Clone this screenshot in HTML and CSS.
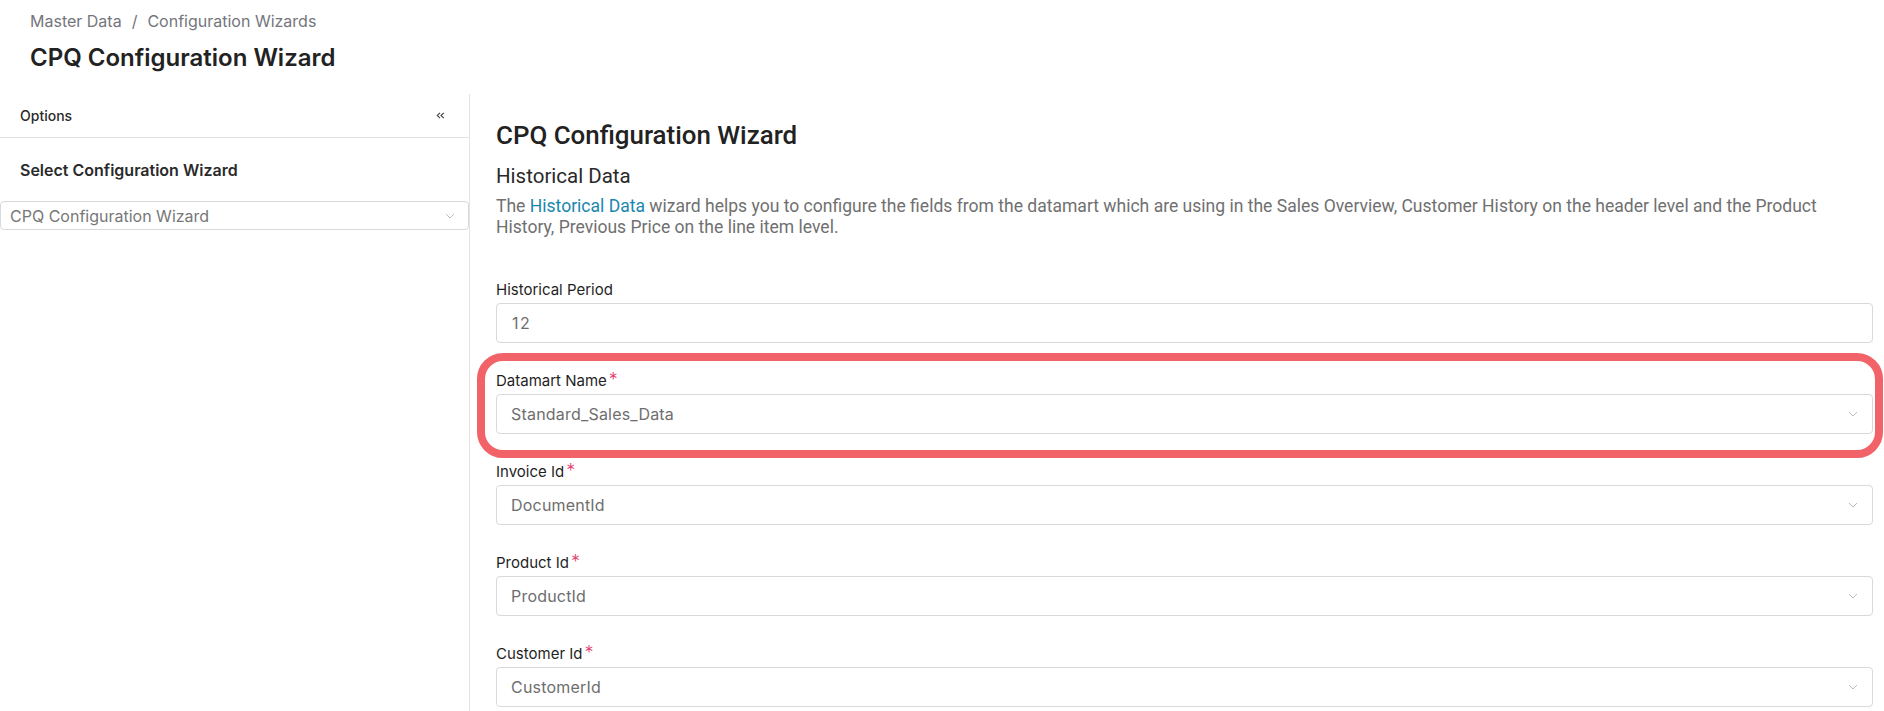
FILE: index.html
```html
<!DOCTYPE html>
<html lang="en">
<head>
<meta charset="utf-8">
<title>CPQ Configuration Wizard</title>
<link rel="stylesheet" href="styles.css">
</head>
<body>
<div class="page">
  <header class="page-header">
    <nav class="breadcrumb">
      <span>Master Data</span>
      <span class="sep">/</span>
      <span>Configuration Wizards</span>
    </nav>
    <h1 class="page-title">CPQ Configuration Wizard</h1>
  </header>

  <div class="layout">
    <aside class="sidebar">
      <div class="sidebar-head">
        <span class="sidebar-title">Options</span>
        <span class="collapse">
          <svg width="9" height="7" viewBox="0 0 9 7"><path d="M4 0.8 L1.2 3.5 L4 6.2 M7.8 0.8 L5 3.5 L7.8 6.2" fill="none" stroke="#444" stroke-width="1.1"/></svg>
        </span>
      </div>
      <div class="sidebar-body">
        <h3 class="sidebar-section">Select Configuration Wizard</h3>
        <div class="select select-sm">
          <span class="select-value">CPQ Configuration Wizard</span>
          <svg class="chev" width="10" height="6" viewBox="0 0 10 6"><path d="M1 1 L5 5 L9 1" fill="none" stroke="#bdbdbd" stroke-width="1"/></svg>
        </div>
      </div>
    </aside>

    <main class="content">
      <h2 class="wizard-title">CPQ Configuration Wizard</h2>
      <h4 class="wizard-sub">Historical Data</h4>
      <p class="wizard-desc">The <a class="link">Historical Data</a> wizard helps you to configure the fields from the datamart which are using in the Sales Overview, Customer History on the header level and the Product History, Previous Price on the line item level.</p>

      <div class="form">
        <div class="field">
          <label class="label">Historical Period</label>
          <div class="input"><span class="num">12</span></div>
        </div>

        <div class="field highlight">
          <div class="ring"></div>
          <label class="label">Datamart Name<span class="req">*</span></label>
          <div class="select">
            <span class="select-value">Standard_Sales_Data</span>
            <svg class="chev" width="10" height="6" viewBox="0 0 10 6"><path d="M1 1 L5 5 L9 1" fill="none" stroke="#bdbdbd" stroke-width="1"/></svg>
          </div>
        </div>

        <div class="field">
          <label class="label">Invoice Id<span class="req">*</span></label>
          <div class="select">
            <span class="select-value">DocumentId</span>
            <svg class="chev" width="10" height="6" viewBox="0 0 10 6"><path d="M1 1 L5 5 L9 1" fill="none" stroke="#bdbdbd" stroke-width="1"/></svg>
          </div>
        </div>

        <div class="field">
          <label class="label">Product Id<span class="req">*</span></label>
          <div class="select">
            <span class="select-value">ProductId</span>
            <svg class="chev" width="10" height="6" viewBox="0 0 10 6"><path d="M1 1 L5 5 L9 1" fill="none" stroke="#bdbdbd" stroke-width="1"/></svg>
          </div>
        </div>

        <div class="field">
          <label class="label">Customer Id<span class="req">*</span></label>
          <div class="select">
            <span class="select-value">CustomerId</span>
            <svg class="chev" width="10" height="6" viewBox="0 0 10 6"><path d="M1 1 L5 5 L9 1" fill="none" stroke="#bdbdbd" stroke-width="1"/></svg>
          </div>
        </div>
      </div>
    </main>
  </div>
</div>
</body>
</html>
```

FILE: styles.css
```css
* { box-sizing: border-box; }

html, body {
  margin: 0;
  padding: 0;
  background: #ffffff;
  font-family: Inter, "Noto Sans", sans-serif;
  color: #222;
  overflow: hidden;
}

.page {
  width: 100%;
  height: 711px;
  display: flex;
  flex-direction: column;
}

/* Header */
.page-header {
  padding: 11px 0 20px 30px;
}

.breadcrumb {
  display: flex;
  gap: 10px;
  font-size: 16px;
  line-height: 20px;
  color: #75757c;
}

.page-title {
  margin: 11px 0 0 0;
  font-size: 24px;
  line-height: 32px;
  font-weight: 600;
  color: #222;
}

/* Layout */
.layout {
  flex: 1;
  display: flex;
  min-height: 0;
}

.sidebar {
  width: 470px;
  flex: none;
  border-right: 1px solid #e3e3e3;
}

.sidebar-head {
  height: 44px;
  display: flex;
  align-items: center;
  justify-content: space-between;
  padding: 0 24px 0 20px;
  border-bottom: 1px solid #e3e3e3;
}

.sidebar-title {
  font-size: 14px;
  font-weight: 500;
  color: #2a2a2a;
}

.collapse {
  display: flex;
  align-items: center;
}

.sidebar-body {
  padding-top: 20px;
}

.sidebar-section {
  margin: 0 0 19px 20px;
  font-size: 16px;
  line-height: 24px;
  font-weight: 600;
  color: #2a2a2a;
}

/* Inputs */
.select,
.input {
  height: 40px;
  border: 1px solid #d9d9d9;
  border-radius: 4px;
  display: flex;
  align-items: center;
  justify-content: space-between;
  padding: 0 14px 0 14px;
  background: #fff;
  font-size: 16px;
  letter-spacing: 0.2px;
  color: #6e6e6e;
}

.select-sm {
  height: 29px;
  width: 469px;
  padding: 0 13px 0 9px;
  letter-spacing: 0;
  color: #777;
}

.num {
  letter-spacing: 1.5px;
  padding-left: 1px;
}

.chev { flex: none; }

/* Content */
.content {
  flex: 1;
  padding: 25px 11px 0 26px;
  min-width: 0;
}

.wizard-title {
  margin: 0;
  font-family: Roboto, "Liberation Sans", sans-serif;
  font-size: 25.9px;
  line-height: 32px;
  font-weight: 500;
  color: #222;
}

.wizard-sub {
  margin: 13px 0 0 0;
  font-family: Roboto, "Liberation Sans", sans-serif;
  font-size: 20.5px;
  line-height: 24px;
  font-weight: 400;
  color: #2a2a2a;
}

.wizard-desc {
  margin: 8px 0 0 0;
  max-width: 1345px;
  font-family: Roboto, "Liberation Sans", sans-serif;
  font-size: 17.55px;
  line-height: 21px;
  color: #707070;
}

.link {
  color: #1a86ae;
  text-decoration: none;
}

.form {
  margin-top: 42px;
  display: flex;
  flex-direction: column;
  gap: 28px;
}

.field {
  display: flex;
  flex-direction: column;
}

.label {
  height: 20px;
  font-size: 15px;
  line-height: 20px;
  font-weight: 400;
  color: #1f1f1f;
  margin-bottom: 3px;
}

.req {
  color: #e23a6c;
  font-size: 18px;
  line-height: 0;
  font-weight: 300;
  margin-left: 2px;
}

.highlight {
  position: relative;
}

.ring {
  position: absolute;
  left: -19px;
  right: -10px;
  top: -18px;
  bottom: -24px;
  border: 8px solid #f26369;
  border-radius: 26px;
  pointer-events: none;
}
```
